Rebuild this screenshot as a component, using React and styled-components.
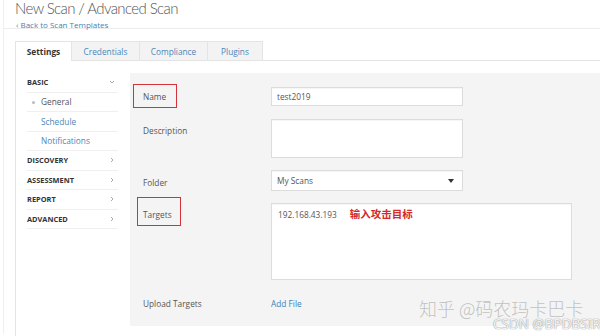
import React from "react";
import styled, { createGlobalStyle } from "styled-components";

const Global = createGlobalStyle`
  html, body { margin: 0; padding: 0; background: #fff; }
  body { font-family: "Open Sans", "Noto Sans", "Noto Sans CJK SC", sans-serif; color: #555; }
  * { box-sizing: border-box; }
`;

const Page = styled.div`
  position: relative;
  width: 600px;
  height: 336px;
  overflow: hidden;
  background: #fff;
`;

const Frame = styled.div`
  margin-left: 3px;
  height: 100%;
  border-left: 1px solid #f0f0f0;
`;

const Header = styled.header`
  height: 31px;
  padding-left: 11px;
  border-bottom: 1px solid #ececec;
`;

const Title = styled.h1`
  margin: -2px 0 0 0;
  font-family: "Lato", "Open Sans", sans-serif;
  font-size: 15px;
  font-weight: 300;
  letter-spacing: -0.6px;
  color: #555;
  line-height: 21px;
`;

const BackLink = styled.a`
  display: block;
  font-size: 8px;
  line-height: 11px;
  color: #3f7fb9;
  text-decoration: none;
  padding-left: 1px;
`;

const Tabs = styled.nav`
  display: flex;
  margin: 12px 0 0 11px;
  height: 20px;
`;

const Tab = styled.div`
  width: ${(p) => p.$w}px;
  height: 20px;
  display: flex;
  align-items: center;
  justify-content: center;
  font-size: 8.3px;
  font-weight: ${(p) => (p.$active ? 700 : 400)};
  color: ${(p) => (p.$active ? "#333" : "#4b86ba")};
  background: ${(p) => (p.$active ? "#fff" : "#f3f3f3")};
  border: 1px solid #e4e4e4;
  border-bottom: ${(p) => (p.$active ? "none" : "1px solid #e4e4e4")};
  border-left: ${(p) => (p.$first ? "1px solid #e4e4e4" : "none")};
`;

const Content = styled.div`
  display: flex;
  margin-left: 11px;
  margin-top: -1px;
  border-top: 1px solid #e4e4e4;
  border-left: 1px solid #e4e4e4;
  padding: 12px 0 0 11px;
  height: 280px;
`;

const Sidebar = styled.aside`
  width: 91px;
  flex: none;
`;

const SideRow = styled.div`
  height: 19.5px;
  display: flex;
  align-items: center;
  justify-content: space-between;
  border-bottom: 1px solid #efefef;
  padding-left: ${(p) => (p.$sub ? 14 : 0)}px;
  padding-right: 3px;
  font-size: ${(p) => (p.$sub ? 8.3 : 7.4)}px;
  font-weight: ${(p) => (p.$sub ? 400 : 700)};
  color: ${(p) => (p.$sub ? (p.$link ? "#4b86ba" : "#555") : "#333")};
  position: relative;
`;

const Bullet = styled.span`
  position: absolute;
  left: 5px;
  top: 8px;
  width: 3px;
  height: 3px;
  border-radius: 50%;
  background: #bbb;
`;

const Chev = styled.svg`
  width: 6px;
  height: 6px;
  fill: none;
  stroke: #aaa;
  stroke-width: 1;
`;

const Panel = styled.section`
  flex: 1;
  margin-left: 12px;
  background: #f4f4f4;
  height: 253px;
  padding: 14px 0 0 13px;
`;

const Row = styled.div`
  display: grid;
  grid-template-columns: 128px auto;
  align-items: ${(p) => (p.$top ? "start" : "center")};
  margin-bottom: ${(p) => p.$mb}px;
`;

const Label = styled.label`
  position: relative;
  font-size: 8.3px;
  color: #555;
  padding-top: ${(p) => p.$pt || 0}px;
  justify-self: start;
  &::after {
    content: "";
    display: ${(p) => (p.$box ? "block" : "none")};
    position: absolute;
    left: ${(p) => (p.$box ? p.$box[0] : 0)}px;
    right: ${(p) => (p.$box ? p.$box[1] : 0)}px;
    top: ${(p) => (p.$box ? p.$box[2] : 0)}px;
    bottom: ${(p) => (p.$box ? p.$box[3] : 0)}px;
    border: 1.5px solid #d3323a;
  }
`;

const Input = styled.div`
  width: ${(p) => p.$w || 192}px;
  height: ${(p) => p.$h}px;
  background: #fff;
  border: 1px solid #dcdcdc;
  box-shadow: inset 0 1px 1px rgba(0, 0, 0, 0.04);
  font-size: 8.3px;
  color: #555;
  padding: ${(p) => (p.$area ? "5px 6px" : "0 5px")};
  display: flex;
  align-items: ${(p) => (p.$area ? "flex-start" : "center")};
  justify-content: space-between;
`;

const Caret = styled.span`
  width: 0;
  height: 0;
  border-left: 3px solid transparent;
  border-right: 3px solid transparent;
  border-top: 4px solid #333;
  margin-right: 3px;
`;

const TargetText = styled.div`
  display: flex;
  align-items: center;
  gap: 13px;
`;

const Note = styled.span`
  color: #d42a2a;
  font-weight: 700;
  font-size: 10.5px;
  font-family: "Noto Sans CJK SC", sans-serif;
  line-height: 1;
  margin-top: -1px;
`;

const Link = styled.a`
  font-size: 8.3px;
  color: #3f7fb9;
`;

const Watermark = styled.div`
  position: absolute;
  left: 419px;
  top: 295px;
  font-family: "Noto Sans CJK SC", sans-serif;
  font-weight: 300;
  font-size: 18px;
  color: rgba(150, 150, 150, 0.55);
  white-space: nowrap;
`;

const Csdn = styled.div`
  position: absolute;
  left: 493px;
  top: 316px;
  font-family: "Noto Sans", sans-serif;
  font-size: 13.5px;
  line-height: 17px;
  color: rgba(255, 255, 255, 0.9);
  text-shadow: 0 0 1px #999, 0 0 1px #999;
  white-space: nowrap;
`;

const Down = () => (
  <Chev viewBox="0 0 6 6"><path d="M1 2 L3 4 L5 2" /></Chev>
);
const Right = () => (
  <Chev viewBox="0 0 6 6"><path d="M2 1 L4 3 L2 5" /></Chev>
);

export default function App() {
  return (
    <Page>
      <Global />
      <Frame>
        <Header>
          <Title>New Scan / Advanced Scan</Title>
          <BackLink>‹ Back to Scan Templates</BackLink>
        </Header>
        <Tabs>
          <Tab $w={57} $active $first>Settings</Tab>
          <Tab $w={68}>Credentials</Tab>
          <Tab $w={68}>Compliance</Tab>
          <Tab $w={55}>Plugins</Tab>
        </Tabs>
        <Content>
          <Sidebar>
            <SideRow>BASIC<Down /></SideRow>
            <SideRow $sub><Bullet />General</SideRow>
            <SideRow $sub $link>Schedule</SideRow>
            <SideRow $sub $link>Notifications</SideRow>
            <SideRow>DISCOVERY<Right /></SideRow>
            <SideRow>ASSESSMENT<Right /></SideRow>
            <SideRow>REPORT<Right /></SideRow>
            <SideRow>ADVANCED<Right /></SideRow>
          </Sidebar>
          <Panel>
            <Row $mb={13}>
              <Label $box={[-10, -11, -7, -6]}>Name</Label>
              <Input $h={19}>test2019</Input>
            </Row>
            <Row $mb={12} $top>
              <Label $pt={6}>Description</Label>
              <Input $h={39} $area />
            </Row>
            <Row $mb={12}>
              <Label $pt={4}>Folder</Label>
              <Input $h={21}>My Scans<Caret /></Input>
            </Row>
            <Row $mb={18} $top>
              <Label $pt={6} $box={[-6, -9, -6, -6]}>Targets</Label>
              <Input $h={77} $w={301} $area>
                <TargetText>192.168.43.193<Note>输入攻击目标</Note></TargetText>
              </Input>
            </Row>
            <Row $mb={0}>
              <Label>Upload Targets</Label>
              <Link>Add File</Link>
            </Row>
          </Panel>
        </Content>
      </Frame>
      <Watermark>知乎 @码农玛卡巴卡</Watermark>
      <Csdn>CSDN @BPDBSIR</Csdn>
    </Page>
  );
}
